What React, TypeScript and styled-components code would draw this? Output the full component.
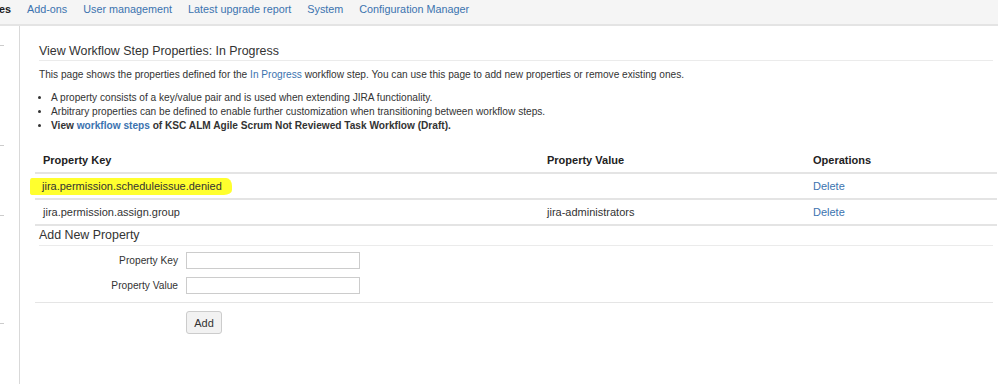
import React from 'react';
import styled, { createGlobalStyle } from 'styled-components';

const GlobalStyle = createGlobalStyle`
  body {
    margin: 0;
    background: #fff;
    font-family: Arial, "Liberation Sans", sans-serif;
    color: #333;
  }
`;

const navItems = ['Add-ons', 'User management', 'Latest upgrade report', 'System', 'Configuration Manager'];

const properties = [
    { key: 'jira.permission.scheduleissue.denied', value: '', marked: true },
    { key: 'jira.permission.assign.group', value: 'jira-administrators', marked: false },
];

const App = () => {
    return (
        <Page>
            <GlobalStyle />
            <TopNav>
                <NavCurrent>es</NavCurrent>
                {navItems.map(item => (
                    <NavLink key={item}>{item}</NavLink>
                ))}
            </TopNav>
            <Body>
                <Sidebar>
                    <Tick $top={19} />
                    <Tick $top={99} />
                    <Tick $top={69} />
                    <Tick $top={107} />
                </Sidebar>
                <Main>
                    <Title>View Workflow Step Properties: In Progress</Title>
                    <Intro>
                        This page shows the properties defined for the <Link>In Progress</Link> workflow step. You can use this page to add new properties or remove existing ones.
                    </Intro>
                    <Bullets>
                        <li>A property consists of a key/value pair and is used when extending JIRA functionality.</li>
                        <li>Arbitrary properties can be defined to enable further customization when transitioning between workflow steps.</li>
                        <li><b>View <Link>workflow steps</Link> of KSC ALM Agile Scrum Not Reviewed Task Workflow (Draft).</b></li>
                    </Bullets>

                    <Table>
                        <colgroup>
                            <col style={{ width: 504 }} />
                            <col style={{ width: 266 }} />
                            <col />
                        </colgroup>
                        <thead>
                        <tr>
                            <Th>Property Key</Th>
                            <Th>Property Value</Th>
                            <Th>Operations</Th>
                        </tr>
                        </thead>
                        <tbody>
                        {properties.map(p => (
                            <tr key={p.key}>
                                <Td>{p.marked ? <Marker>{p.key}</Marker> : p.key}</Td>
                                <Td>{p.value}</Td>
                                <Td><Link>Delete</Link></Td>
                            </tr>
                        ))}
                        </tbody>
                    </Table>

                    <SubTitle>Add New Property</SubTitle>
                    <Form>
                        <FieldRow>
                            <Label>Property Key</Label>
                            <Input type="text" />
                        </FieldRow>
                        <FieldRow>
                            <Label>Property Value</Label>
                            <Input type="text" />
                        </FieldRow>
                        <Buttons>
                            <Button>Add</Button>
                        </Buttons>
                    </Form>
                </Main>
            </Body>
        </Page>
    );
};

const Page = styled.div`
    width: 998px;
    height: 384px;
    overflow: hidden;
    display: flex;
    flex-direction: column;
    font-size: 11px;
`;

const TopNav = styled.nav`
    height: 26px;
    box-sizing: border-box;
    flex: none;
    display: flex;
    align-items: center;
    gap: 16px;
    padding-bottom: 6px;
    background: #f5f5f5;
    border-bottom: 2px solid #e4e4e4;
    font-size: 10.8px;
`;

const NavCurrent = styled.span`
    font-weight: bold;
    color: #222;
    margin-left: -1px;
`;

const NavLink = styled.a`
    color: #3b73af;
    text-decoration: none;
    cursor: pointer;
`;

const Body = styled.div`
    flex: 1;
    display: flex;
`;

const Sidebar = styled.aside`
    width: 19px;
    flex: none;
    border-right: 1px solid #d9d9d9;
    display: flex;
    flex-direction: column;
`;

const Tick = styled.div<{ $top: number }>`
    margin-top: ${p => p.$top}px;
    width: 4px;
    height: 1px;
    background: #ccc;
`;

const Main = styled.main`
    flex: 1;
    padding: 17px 5px 0 19px;
    display: flex;
    flex-direction: column;
`;

const Title = styled.h2`
    margin: 0;
    font-size: 12.4px;
    font-weight: normal;
    line-height: 16px;
    padding-bottom: 1px;
    border-bottom: 1px solid #ebebeb;
`;

const Intro = styled.p`
    margin: 7px 0 0;
    font-size: 10.15px;
    line-height: 14px;
`;

const Link = styled.a`
    color: #3b73af;
    text-decoration: none;
    cursor: pointer;
`;

const Bullets = styled.ul`
    margin: 9px 0 0;
    padding-left: 12px;
    font-size: 10.15px;
    line-height: 14px;
`;

const Table = styled.table`
    margin: 15px 0 0 -4px;
    border-collapse: collapse;
    table-layout: fixed;
    width: calc(100% + 8px);
    font-size: 11px;
`;

const Th = styled.th`
    text-align: left;
    font-weight: bold;
    color: #222;
    padding: 0 8px;
    height: 24px;
    border-bottom: 2px solid #e4e4e4;
`;

const Td = styled.td`
    padding: 0 8px;
    height: 24px;
    border-bottom: 2px solid #e4e4e4;
`;

const Marker = styled.span`
    background: #ffff2e;
    padding: 2px 10px 3px 12px;
    margin-left: -13px;
    border-radius: 2px 6px 8px 3px / 3px 8px 5px 2px;
`;

const SubTitle = styled.h3`
    margin: 1px 0 0;
    font-size: 12.4px;
    font-weight: normal;
    line-height: 16px;
    padding-bottom: 2px;
    border-bottom: 1px solid #ebebeb;
`;

const Form = styled.form`
    margin: 0 0 0 -4px;
    padding-top: 6px;
    display: flex;
    flex-direction: column;
    gap: 8px;
`;

const FieldRow = styled.div`
    display: flex;
    align-items: center;
    gap: 8px;
`;

const Label = styled.label`
    width: 143px;
    text-align: right;
    font-size: 10.2px;
`;

const Input = styled.input`
    width: 174px;
    height: 17px;
    box-sizing: border-box;
    border: 1px solid #ccc;
    padding: 0 3px;
    margin: 0;
`;

const Buttons = styled.div`
    border-top: 1px solid #e5e5e5;
    padding: 8px 0 0 151px;
`;

const Button = styled.button`
    width: 36px;
    height: 23px;
    padding: 0;
    border: 1px solid #ccc;
    border-radius: 3px;
    background: #f2f2f2;
    color: #333;
    font-family: Arial, "Liberation Sans", sans-serif;
    font-size: 11px;
`;

export default App;
